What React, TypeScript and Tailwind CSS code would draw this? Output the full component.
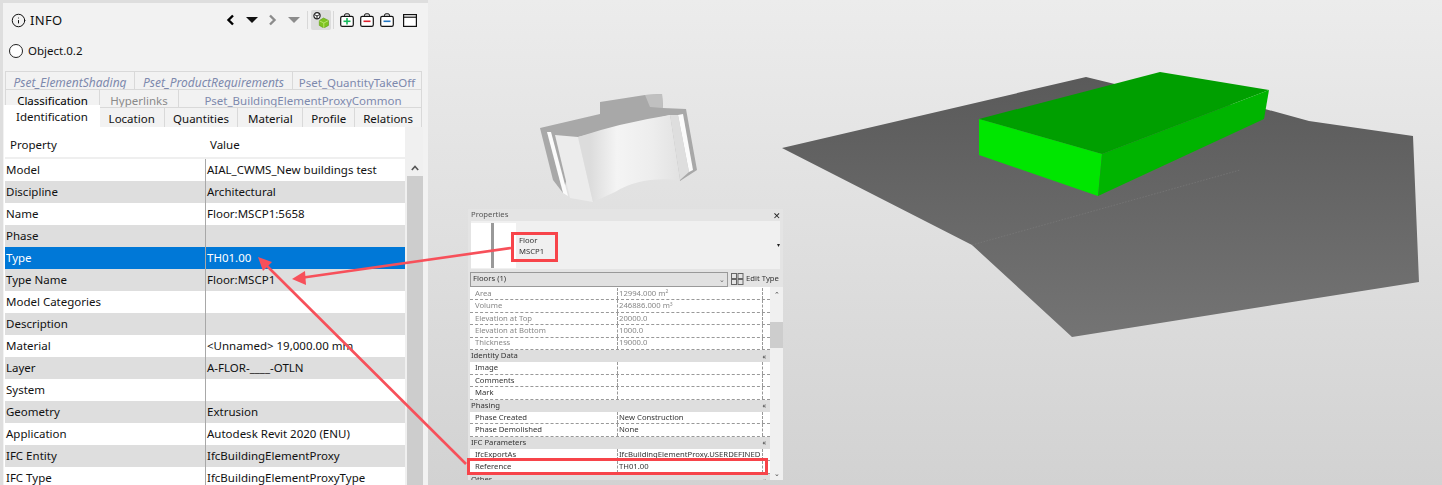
import { Info } from "lucide-react";

type Tab = { label: string; w: string; cls?: string };

const topTabs: Tab[] = [
  { label: "Pset_ElementShading", w: "w-[130px]", cls: "italic text-[12px] text-[#7d89ad]" },
  { label: "Pset_ProductRequirements", w: "w-[158px]", cls: "italic text-[12px] text-[#7d89ad]" },
  { label: "Pset_QuantityTakeOff", w: "w-[129px]", cls: "text-[#7d89ad]" },
];
const midTabs: Tab[] = [
  { label: "Classification", w: "w-[95px]", cls: "text-black" },
  { label: "Hyperlinks", w: "w-[79px]", cls: "text-[#8a8a8a]" },
  { label: "Pset_BuildingElementProxyCommon", w: "w-[243px] pl-[6px]", cls: "text-[#7d89ad]" },
];
const lowTabs: Tab[] = [
  { label: "Location", w: "w-[65px]" },
  { label: "Quantities", w: "w-[74px]" },
  { label: "Material", w: "w-[65px]" },
  { label: "Profile", w: "w-[52px]" },
  { label: "Relations", w: "w-[67px]" },
];

const rows: [string, string][] = [
  ["Model", "AIAL_CWMS_New buildings test"],
  ["Discipline", "Architectural"],
  ["Name", "Floor:MSCP1:5658"],
  ["Phase", ""],
  ["Type", "TH01.00"],
  ["Type Name", "Floor:MSCP1"],
  ["Model Categories", ""],
  ["Description", ""],
  ["Material", "<Unnamed> 19,000.00 mm"],
  ["Layer", "A-FLOR-____-OTLN"],
  ["System", ""],
  ["Geometry", "Extrusion"],
  ["Application", "Autodesk Revit 2020 (ENU)"],
  ["IFC Entity", "IfcBuildingElementProxy"],
  ["IFC Type", "IfcBuildingElementProxyType"],
];

type RevitRow = { head?: boolean; label: string; value?: string; dim?: boolean; sup?: string };

const revitRows: RevitRow[] = [
  { label: "Area", value: "12994.000 m", sup: "2", dim: true },
  { label: "Volume", value: "246886.000 m", sup: "3", dim: true },
  { label: "Elevation at Top", value: "20000.0", dim: true },
  { label: "Elevation at Bottom", value: "1000.0", dim: true },
  { label: "Thickness", value: "19000.0", dim: true },
  { head: true, label: "Identity Data" },
  { label: "Image" },
  { label: "Comments" },
  { label: "Mark" },
  { head: true, label: "Phasing" },
  { label: "Phase Created", value: "New Construction" },
  { label: "Phase Demolished", value: "None" },
  { head: true, label: "IFC Parameters" },
  { label: "IfcExportAs", value: "IfcBuildingElementProxy.USERDEFINED" },
  { label: "Reference", value: "TH01.00" },
  { head: true, label: "Other" },
];

const Bag = ({ color, plus }: { color: string; plus?: boolean }) => (
  <svg width="14" height="14" viewBox="0 0 14 14" fill="none">
    <path d="M4.5 3.5V2.2Q4.5 .8 6 .8H8Q9.5 .8 9.5 2.2V3.5" stroke="#111" strokeWidth="1" />
    <rect x=".7" y="3.3" width="12.6" height="10" rx="1.6" fill="#fff" stroke="#111" strokeWidth="1.2" />
    <path d="M3.5 8.3H10.5" stroke={color} strokeWidth="1.6" />
    {plus && <path d="M7 5V11.6" stroke={color} strokeWidth="1.6" />}
  </svg>
);

const Toolbar = () => (
  <div className="flex items-center">
    <svg width="9" height="12" viewBox="0 0 9 12" fill="none">
      <path d="M7 1.5 2.5 6 7 10.5" stroke="#000" strokeWidth="2.4" />
    </svg>
    <svg className="ml-[11px]" width="12" height="6" viewBox="0 0 12 6">
      <path d="M0 0H12L6 6Z" fill="#111" />
    </svg>
    <svg className="ml-[10px]" width="9" height="12" viewBox="0 0 9 12" fill="none">
      <path d="M2 1.5 6.5 6 2 10.5" stroke="#8c8c8c" strokeWidth="2.4" />
    </svg>
    <svg className="ml-[11px]" width="12" height="6" viewBox="0 0 12 6">
      <path d="M0 0H12L6 6Z" fill="#8c8c8c" />
    </svg>
    <div className="ml-[7px] h-[18px] w-px bg-[#d8d8d8]" />
    <div className="ml-[3px] flex h-[20px] w-[20px] items-center justify-center rounded-[2px] bg-[#dcdcdc]">
      <svg width="16" height="16" viewBox="0 0 16 16">
        <path d="M10.5 6 15.5 8.4V13.4L10.8 16 6.3 13.4V8.6Z" fill="#7ec321" stroke="#5b9a12" strokeWidth=".6" />
        <path d="M6.4 8.8 10.8 11 15.4 8.6M10.8 11V16" fill="none" stroke="#c8ec80" strokeWidth=".8" />
        <circle cx="4" cy="3.8" r="3.1" fill="#fff" stroke="#222" strokeWidth="1.2" />
        <path d="M1.5 2.6 4 4 6.5 2.6M4 4V6.8" fill="none" stroke="#222" strokeWidth="1" />
      </svg>
    </div>
    <div className="ml-[2px] h-[18px] w-px bg-[#d8d8d8]" />
    <div className="ml-[6px] flex gap-[6px]">
      <Bag color="#14b85a" plus />
      <Bag color="#e0202c" />
      <Bag color="#2277c4" />
    </div>
    <svg className="ml-[9px]" width="14" height="13" viewBox="0 0 14 13" fill="none">
      <rect x=".6" y=".6" width="12.8" height="11.8" fill="#fff" stroke="#111" strokeWidth="1.2" />
      <path d="M.6 3.2H13.4" stroke="#111" strokeWidth="1.2" />
    </svg>
  </div>
);

const TabRow = ({ tabs }: { tabs: Tab[] }) => (
  <div className="flex h-[18px]">
    {tabs.map((t) => (
      <div
        key={t.label}
        className={`flex items-center justify-center whitespace-nowrap border-t border-r border-[#d9d9d9] pt-[4px] first:border-l ${t.w} ${t.cls ?? ""}`}
      >
        {t.label}
      </div>
    ))}
  </div>
);

const InfoPanel = () => (
  <aside className="flex h-full w-[428px] shrink-0 flex-col border-[3px] border-b-0 border-r-0 border-[#dedede] bg-[#f2f2f2] pr-[1px] font-['Noto_Sans',sans-serif] text-[11.5px] leading-none text-[#111]">
    <div className="flex h-[34px] shrink-0 items-center justify-between pl-[8px] pr-[10px]">
      <div className="flex items-center gap-[4px] text-[13px] tracking-[0.3px]">
        <Info size={15} strokeWidth={1.6} className="text-[#111]" />
        <span>INFO</span>
      </div>
      <Toolbar />
    </div>
    <div className="flex h-[28px] shrink-0 items-center gap-[5px] pl-[6px]">
      <span className="h-[14px] w-[14px] rounded-full border-[1.5px] border-[#222] bg-white" />
      <span>Object.0.2</span>
    </div>
    <div className="mt-[6px] ml-[2px] w-[417px] shrink-0">
      <TabRow tabs={topTabs} />
      <TabRow tabs={midTabs} />
      <div className="flex h-[20px] items-stretch">
        <div className="z-10 -mt-[2px] -ml-[1px] flex h-[22px] w-[96px] items-center justify-center bg-white pt-[2px]">
          Identification
        </div>
        {lowTabs.map((t) => (
          <div
            key={t.label}
            className={`flex items-center justify-center border-t border-r border-[#d9d9d9] pt-[2px] ${t.w}`}
          >
            {t.label}
          </div>
        ))}
      </div>
    </div>
    <div className="ml-[1px] flex min-h-0 w-[419px] flex-1 overflow-hidden bg-white">
      <div className="w-[401px] shrink-0 pl-[1px]">
        <div className="flex h-[32px] items-center border-b-2 border-[#efefef] pt-[6px]">
          <span className="w-[199px] pl-[5px]">Property</span>
          <span className="pl-[6px]">Value</span>
        </div>
        {rows.map(([k, v], i) => {
          const selected = k === "Type";
          return (
            <div
              key={k}
              className={`flex h-[22px] items-center ${
                selected ? "bg-[#0078d7] text-white" : i % 2 === 1 ? "bg-[#dedede]" : "bg-white"
              }`}
            >
              <span className="w-[200px] shrink-0 pl-[1px]">{k}</span>
              <span className="flex h-full items-center whitespace-nowrap border-l border-[#a8a8a8] pl-[1px]">
                {v}
              </span>
            </div>
          );
        })}
      </div>
      <div className="flex flex-1 flex-col bg-[#f0f0f0]">
        <div className="h-[32px] shrink-0" />
        <div className="ml-[2px] flex flex-1 flex-col">
          <div className="flex h-[17px] shrink-0 items-center justify-center">
            <svg width="8" height="6" viewBox="0 0 8 6" fill="none">
              <path d="M.8 5 4 1.5 7.2 5" stroke="#555" strokeWidth="1.6" />
            </svg>
          </div>
          <div className="flex-1 bg-[#cdcdcd]" />
        </div>
      </div>
    </div>
  </aside>
);

const Model3D = () => (
  <svg className="absolute left-0 top-0" width="1442" height="485" viewBox="0 0 1442 485">
    <defs>
      <linearGradient id="floor" x1="0" y1="77" x2="0" y2="337" gradientUnits="userSpaceOnUse">
        <stop offset="0" stopColor="#5a5a5a" />
        <stop offset="1" stopColor="#747474" />
      </linearGradient>
      <linearGradient id="curve" x1="590" y1="0" x2="680" y2="0" gradientUnits="userSpaceOnUse">
        <stop offset="0" stopColor="#dcdcdc" />
        <stop offset=".3" stopColor="#f4f4f4" />
        <stop offset=".7" stopColor="#ededed" />
        <stop offset="1" stopColor="#e2e2e2" />
      </linearGradient>
    </defs>
    <path d="M782 148 1086 77 1160 95 1265 109 1309 121 1413 136 1419 282 1072 337 972 245Z" fill="url(#floor)" />
    <path d="M972 245 1240 170" stroke="#7d7d7d" strokeWidth=".6" strokeDasharray="1.5 1.5" fill="none" />
    <path d="M979 119 1160 72 1269 90 1102 154Z" fill="#009f00" />
    <path d="M979 119 1102 154 1098 196 979 155Z" fill="#00e600" />
    <path d="M1102 154 1269 90 1264 119 1098 196Z" fill="#00b400" />

    <path d="M540 128 600 114 600 102 645 95 662 94 663 108 686 109 697 170 680 181 670 115 578 137 563 193 553 180Z" fill="#a8a8a8" />
    <path d="M645 95 662 94 663 108 650 107Z" fill="#c0c0c0" />
    <path d="M555 135 578 137 593 202 570 198Z" fill="#ececec" />
    <path d="M578 137Q620 123 670 115L680 180Q640 176 615 192L593 202Z" fill="url(#curve)" />
    <path d="M547 132 551 132 568 196 563 193Z" fill="#fbfbfb" />
    <path d="M670 115 678 115 689 172 680 180Z" fill="#dedede" />
    <path d="M678 115 683 114 693 170 689 172Z" fill="#fbfbfb" />
  </svg>
);

const RevitWindow = () => (
  <div className="absolute left-[468px] top-[209px] flex h-[271px] w-[315px] flex-col bg-[#e4e4e4] font-['Noto_Sans',sans-serif] text-[7.7px] leading-none text-[#333] blur-[0.3px]">
    <div className="flex h-[12px] shrink-0 items-center justify-between pl-[3px] pr-[2px] text-[#555]">
      <span>Properties</span>
      <span className="text-[9px] text-[#222]">✕</span>
    </div>
    <div className="mx-[3px] flex h-[48px] shrink-0 items-center bg-[#f0f0f0]">
      <div className="h-[45px] w-[45px] shrink-0 bg-white pl-[20px]">
        <div className="h-full w-[3px] bg-[#999]" />
      </div>
      <div className="ml-[3px] flex flex-1 flex-col gap-[3px] pt-[3px]">
        <span>Floor</span>
        <span>MSCP1</span>
      </div>
      <span className="text-[6px] text-[#222]">▾</span>
    </div>
    <div className="mt-[2px] flex h-[16px] shrink-0 items-center pl-[2px]">
      <div className="flex h-[15px] w-[258px] items-center justify-between border border-[#999] bg-[#e1e1e1] px-[2px]">
        <span>Floors (1)</span>
        <span className="text-[7px] text-[#666]">⌄</span>
      </div>
      <svg className="ml-[3px]" width="13" height="12" viewBox="0 0 13 12" fill="none" stroke="#666">
        <rect x=".5" y=".5" width="5" height="5" />
        <rect x="7" y=".5" width="5" height="5" />
        <rect x=".5" y="6.5" width="5" height="5" />
        <rect x="7" y="6.5" width="5" height="5" />
      </svg>
      <span className="ml-[2px] whitespace-nowrap text-[#333]">Edit Type</span>
    </div>
    <div className="flex min-h-0 flex-1 pl-[2px]">
      <div className="flex-1 overflow-hidden bg-white pt-[1px]">
        {revitRows.map((r) =>
          r.head ? (
            <div
              key={r.label}
              className="flex h-[12.4px] items-center justify-between bg-[#dedede] pl-[1px] pr-[4px] text-[#333]"
            >
              <span>{r.label}</span>
              <span className="text-[7px]">«</span>
            </div>
          ) : (
            <div key={r.label} className="flex h-[12.4px] items-center border-b border-dashed border-[#999]">
              <span className={`w-[147px] shrink-0 pl-[5px] ${r.dim ? "text-[#888]" : ""}`}>{r.label}</span>
              <span
                className={`flex h-full w-[146px] items-center whitespace-nowrap border-x border-dashed border-[#999] pl-[1px] ${
                  r.dim ? "text-[#888]" : "text-[#333]"
                }`}
              >
                {r.value}
                {r.sup && <sup className="text-[5px]">{r.sup}</sup>}
              </span>
            </div>
          ),
        )}
      </div>
      <div className="flex w-[13px] shrink-0 flex-col items-center bg-[#f0f0f0]">
        <span className="mt-[4px] text-[7px] text-[#444]">⌃</span>
        <div className="mt-[24px] h-[26px] w-full bg-[#cdcdcd]" />
        <div className="flex-1" />
        <span className="mb-[3px] text-[7px] text-[#444]">⌄</span>
      </div>
    </div>
  </div>
);

const Annotations = () => (
  <>
    <div className="absolute left-[511px] top-[232px] h-[30px] w-[47px] border-[3px] border-[#f7444a]" />
    <div className="absolute left-[467px] top-[458px] h-[17px] w-[301px] border-[3px] border-[#f7444a]" />
    <svg className="absolute left-0 top-0" width="1442" height="485" viewBox="0 0 1442 485" fill="none">
      <path d="M511 248 300 278" stroke="#f7505a" strokeWidth="2.6" />
      <path d="M292 279 305 271 306 285Z" fill="#f7505a" />
      <path d="M466 464 264 263" stroke="#f7505a" strokeWidth="2.6" />
      <path d="M258 257 272 262 263 271Z" fill="#f7505a" />
    </svg>
  </>
);

export default function App() {
  return (
    <div className="relative flex h-[485px] w-[1442px] overflow-hidden bg-gradient-to-b from-[#ececec] to-[#d2d2d2]">
      <Model3D />
      <div className="relative h-full">
        <InfoPanel />
      </div>
      <RevitWindow />
      <Annotations />
    </div>
  );
}
